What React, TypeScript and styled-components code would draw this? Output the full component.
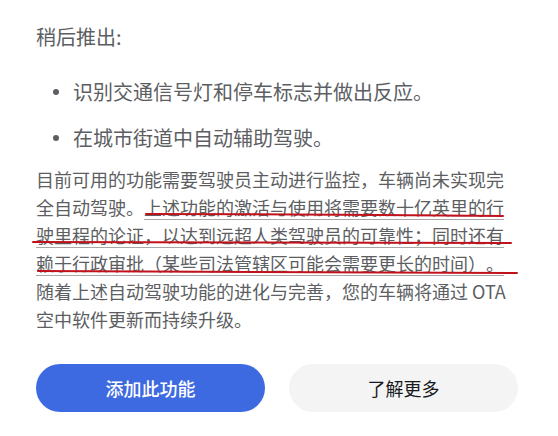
import styled, { createGlobalStyle } from 'styled-components';

const GlobalStyle = createGlobalStyle`
  html, body {
    margin: 0;
    padding: 0;
    background: #fff;
  }
  body {
    font-family: "Noto Sans CJK SC", "Noto Sans", sans-serif;
    color: #5c5e62;
    text-spacing-trim: space-all;
  }
`;

const Page = styled.div`
  width: 558px;
  padding: 22px 40px 0 36px;
  box-sizing: border-box;
`;

const Title = styled.h2`
  margin: 0;
  font-size: 20px;
  line-height: 30px;
  font-weight: 400;
  color: #5c5e62;
`;

const List = styled.ul`
  list-style: none;
  margin: 25px 0 0;
  padding: 0 0 0 17px;
  display: flex;
  flex-direction: column;
  gap: 16px;
`;

const Item = styled.li`
  display: flex;
  align-items: center;
  gap: 14px;
  font-size: 20px;
  line-height: 30px;
  &::before {
    content: '';
    width: 6px;
    height: 6px;
    border-radius: 50%;
    background: #5c5e62;
    flex: none;
  }
`;

const Body = styled.div`
  position: relative;
  margin-top: 12px;
`;

const Text = styled.p`
  margin: 0;
  font-size: 18px;
  line-height: 28px;
`;

const Marked = styled.span`
  text-decoration: underline;
  text-decoration-color: #a7a7a7;
  text-decoration-thickness: 1px;
  text-underline-offset: 4px;
`;

const Scribble = styled.svg`
  position: absolute;
  left: 0;
  top: 0;
  width: 100%;
  height: 100%;
  overflow: visible;
  pointer-events: none;
`;

const Actions = styled.div`
  display: grid;
  grid-template-columns: 1fr 1fr;
  gap: 24px;
  margin-top: 31px;
`;

const Button = styled.button<{ $primary?: boolean }>`
  height: 48px;
  border: none;
  border-radius: 24px;
  font-family: inherit;
  font-size: 18px;
  font-weight: ${(p) => (p.$primary ? 500 : 400)};
  background: ${(p) => (p.$primary ? '#3e6ae1' : '#f4f4f4')};
  color: ${(p) => (p.$primary ? '#fff' : '#171a20')};
  cursor: pointer;
`;

const redLines = [
  'M110 49 Q290 49 467 51',
  'M-3 77 Q240 77 475 78',
  'M2 106 Q240 106 481 108',
];

export default function App() {
  return (
    <>
      <GlobalStyle />
      <Page>
        <Title>稍后推出:</Title>
        <List>
          <Item>识别交通信号灯和停车标志并做出反应。</Item>
          <Item>在城市街道中自动辅助驾驶。</Item>
        </List>
        <Body>
          <Text>
            目前可用的功能需要驾驶员主动进行监控，车辆尚未实现完全自动驾驶。
            <Marked>
              上述功能的激活与使用将需要数十亿英里的行驶里程的论证，以达到远超人类驾驶员的可靠性；同时还有赖于行政审批（某些司法管辖区可能会需要更长的时间）。
            </Marked>
            随着上述自动驾驶功能的进化与完善，您的车辆将通过 OTA 空中软件更新而持续升级。
          </Text>
          <Scribble>
            {redLines.map((d) => (
              <path key={d} d={d} fill="none" stroke="#c1121c" strokeWidth="2" strokeLinecap="round" />
            ))}
          </Scribble>
        </Body>
        <Actions>
          <Button $primary>添加此功能</Button>
          <Button>了解更多</Button>
        </Actions>
      </Page>
    </>
  );
}
